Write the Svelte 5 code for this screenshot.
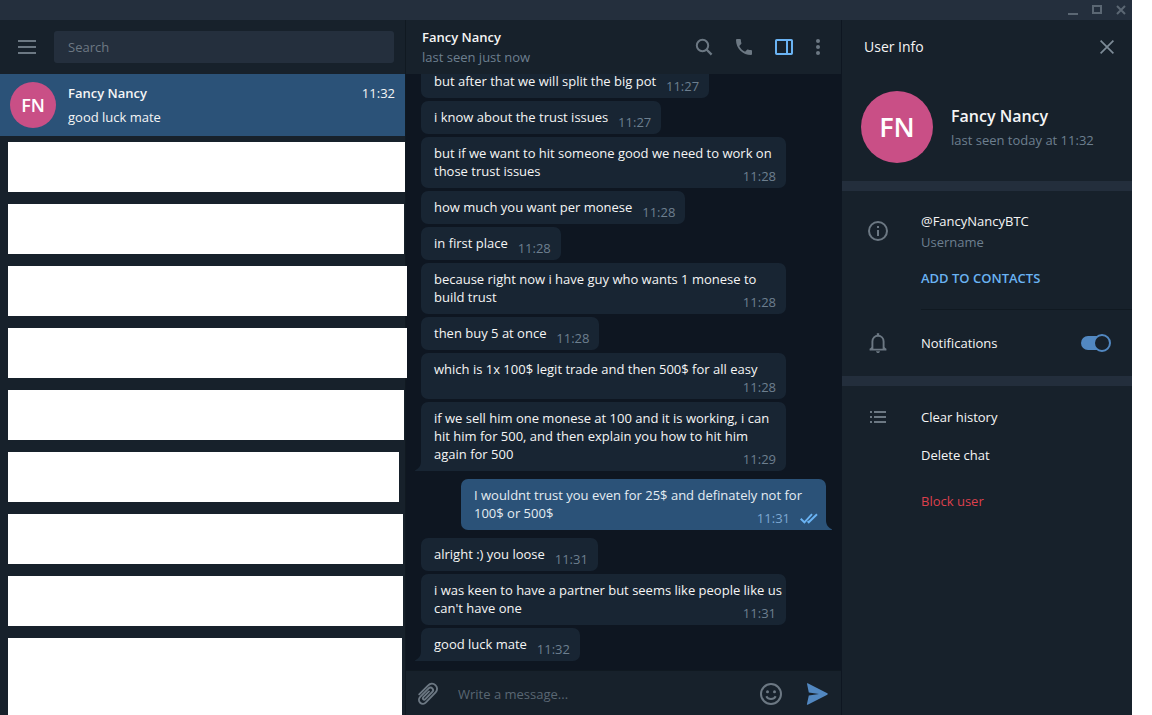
<script>
  const messages = [
    { text: 'but after that we will split the big pot', time: '11:27' },
    { text: 'i know about the trust issues', time: '11:27' },
    { text: 'but if we want to hit someone good we need to work on those trust issues', time: '11:28' },
    { text: 'how much you want per monese', time: '11:28' },
    { text: 'in first place', time: '11:28' },
    { text: 'because right now i have guy who wants 1 monese to build trust', time: '11:28' },
    { text: 'then buy 5 at once', time: '11:28' },
    { text: 'which is 1x 100$ legit trade and then 500$ for all easy', time: '11:28' },
    { text: 'if we sell him one monese at 100 and it is working, i can hit him for 500, and then explain you how to hit him again for 500', time: '11:29', tail: true },
    { text: 'I wouldnt trust you even for 25$ and definately not for 100$ or 500$', time: '11:31', tail: true, out: true },
    { text: 'alright :) you loose', time: '11:31' },
    { text: "i was keen to have a partner but seems like people like us can't have one", time: '11:31' },
    { text: 'good luck mate', time: '11:32', tail: true },
  ];

  // Right inset of each blanked-out conversation, in pixels.
  const blanks = [0, 1, -2, -2, 1, 6, 2, 2, 3];

  let notifications = $state(true);
  let query = $state('');
  let draft = $state('');
</script>

<div class="window">
  <header class="titlebar">
    <button aria-label="Minimize"><svg width="10" height="10" viewBox="0 0 10 10"><path d="M0 9H10" /></svg></button>
    <button aria-label="Maximize"><svg width="10" height="10" viewBox="0 0 10 10"><path d="M1 1H9V8H1Z" /></svg></button>
    <button aria-label="Close"><svg width="10" height="10" viewBox="0 0 10 10"><path d="M1 1L9 9M9 1L1 9" /></svg></button>
  </header>

  <div class="columns">
    <aside class="sidebar">
      <div class="bar search-bar">
        <button aria-label="Menu">
          <svg width="18" height="14" viewBox="0 0 18 14"><path d="M0 1H18M0 7H18M0 13H18" stroke="#6c7883" stroke-width="2" /></svg>
        </button>
        <input class="search" type="text" placeholder="Search" aria-label="Search" bind:value={query} />
      </div>
      <button class="conversation">
        <span class="avatar">FN</span>
        <span class="summary">
          <span class="line"><strong>Fancy Nancy</strong><time>11:32</time></span>
          <span class="line">good luck mate</span>
        </span>
      </button>
      <div class="blanks">
        {#each blanks as inset}
          <div class="blank" style="width: calc(100% - {inset}px)"></div>
        {/each}
      </div>
    </aside>

    <main class="chat">
      <header class="bar chat-bar">
        <div class="peer">
          <strong>Fancy Nancy</strong>
          <span class="muted">last seen just now</span>
        </div>
        <div class="tools">
          <button aria-label="Search messages">
            <svg width="18" height="18" viewBox="0 0 18 18" fill="none" stroke="#6c7883" stroke-width="2"><circle cx="7.5" cy="7.5" r="5.7" /><path d="M11.5 11.5L16.6 16.6" stroke-width="2.3" /></svg>
          </button>
          <button aria-label="Call">
            <svg width="16" height="16" viewBox="3 3 18 18" fill="#6c7883"><path d="M6.62 10.79c1.44 2.83 3.76 5.14 6.59 6.59l2.2-2.2c.27-.27.67-.36 1.02-.24 1.12.37 2.33.57 3.57.57.55 0 1 .45 1 1V20c0 .55-.45 1-1 1-9.39 0-17-7.61-17-17 0-.55.45-1 1-1h3.5c.55 0 1 .45 1 1 0 1.25.2 2.45.57 3.57.11.35.03.74-.25 1.02l-2.2 2.2z" /></svg>
          </button>
          <button aria-label="Toggle user info">
            <svg width="18" height="16" viewBox="0 0 18 16" fill="none" stroke="#6ab3f3" stroke-width="2"><rect x="1" y="1" width="16" height="14" rx="0.7" /><path d="M12 1V15" /></svg>
          </button>
          <button aria-label="More">
            <svg width="4" height="16" viewBox="0 0 4 16" fill="#6c7883"><circle cx="2" cy="2" r="2" /><circle cx="2" cy="8" r="2" /><circle cx="2" cy="14" r="2" /></svg>
          </button>
        </div>
      </header>

      <div class="history">
        {#each messages as m}
          <div class="bubble" class:out={m.out} class:tail={m.tail}>
            {m.text}<span class="spacer"></span>
            <span class="stamp">
              <time>{m.time}</time>
              {#if m.out}
                <svg width="18" height="11" viewBox="0 0 18 11" fill="none" stroke="#6ab3f3" stroke-width="1.9"><path d="M0.7 5.8L4.4 9.3L12 1.2M7.6 8.2L8.7 9.3L17 1.2" /></svg>
              {/if}
            </span>
            {#if m.tail}
              <svg class="tail-shape" width="7" height="10" viewBox="0 0 7 10"><path d="M7 0V10H0.6C-0.2 10 -0.1 9.4 0.6 9C4.6 7 6 4 6 0Z" /></svg>
            {/if}
          </div>
        {/each}
      </div>

      <form class="composer">
        <button type="button" aria-label="Attach">
          <svg width="22" height="24" viewBox="0 0 22 24" fill="none" stroke="#6c7883" stroke-width="1.9" stroke-linecap="round"><path d="M2.2 12.4L11.2 3.4C13.1 1.4 16.2 1.1 18.4 3.1C20.6 5.1 20.6 8.3 18.6 10.4L8.9 20.4C7.3 22.1 4.8 22.2 3.2 20.7C1.5 19.1 1.6 16.6 3.2 14.9L11.6 6.4C12.7 5.3 14.3 5.3 15.3 6.3C16.3 7.3 16.3 8.9 15.2 10L8.3 17.1C7.6 17.8 6.8 17.8 6.2 17.3C5.6 16.7 5.7 15.8 6.3 15.2L12 9.4" /></svg>
        </button>
        <input type="text" placeholder="Write a message..." aria-label="Write a message" bind:value={draft} />
        <button type="button" aria-label="Emoji">
          <svg width="22" height="22" viewBox="0 0 22 22" fill="none" stroke="#6c7883" stroke-width="2"><circle cx="11" cy="11" r="10" /><path d="M6.3 13.2C8.2 16.8 13.8 16.8 15.7 13.2" /><circle cx="7.5" cy="8.7" r="1.5" fill="#6c7883" stroke="none" /><circle cx="14.5" cy="8.7" r="1.5" fill="#6c7883" stroke="none" /></svg>
        </button>
        <button type="button" aria-label="Send">
          <svg width="22" height="22" viewBox="0 0 22 22" fill="#5288c1"><path d="M1 0.8C0.8 0.3 1.2 0.1 1.7 0.3L21.3 10.3C21.9 10.6 21.9 11.4 21.3 11.7L1.7 21.7C1.2 21.9 0.8 21.7 0.9 21.2L2.8 12.6L13 11L2.8 9.4Z" /></svg>
        </button>
      </form>
    </main>

    <aside class="info">
      <header class="bar info-bar">
        <h2>User Info</h2>
        <button aria-label="Close panel">
          <svg width="14" height="14" viewBox="0 0 14 14" stroke="#7d8b97" stroke-width="1.7"><path d="M0.6 0.6L13.4 13.4M13.4 0.6L0.6 13.4" /></svg>
        </button>
      </header>
      <section class="profile">
        <span class="avatar large">FN</span>
        <div class="who">
          <h3>Fancy Nancy</h3>
          <span class="muted">last seen today at 11:32</span>
        </div>
      </section>
      <section class="details">
        <div class="row contact">
          <svg class="icon" width="20" height="20" viewBox="0 0 20 20" fill="none" stroke="#6c7883" stroke-width="2"><circle cx="10" cy="10" r="9" /><path d="M10 9V15M10 5V7" /></svg>
          <div class="fields">
            <span>@FancyNancyBTC</span>
            <span class="muted">Username</span>
            <button class="add">ADD TO CONTACTS</button>
          </div>
        </div>
        <div class="row notify">
          <svg class="icon" width="18" height="20" viewBox="0 0 18 20" fill="none" stroke="#6c7883" stroke-width="1.9"><path d="M0.6 16.6H17.4M3.4 16.6V8.6C3.4 5 5.8 2.8 9 2.8C12.2 2.8 14.6 5 14.6 8.6V16.6" /><path d="M9 0.2V3" stroke-width="2.4" /><path d="M3.4 14.6L1.2 16.6M14.6 14.6L16.8 16.6" /><path d="M7 18.2H11C10.8 19.4 10 20 9 20S7.2 19.4 7 18.2Z" fill="#6c7883" stroke="none" /></svg>
          <label for="notifications">Notifications</label>
          <input id="notifications" class="switch" type="checkbox" bind:checked={notifications} />
        </div>
      </section>
      <section class="actions">
        <div class="row">
          <svg class="icon" width="16" height="12" viewBox="0 0 16 12" stroke="#6c7883" stroke-width="2"><path d="M0 1H2M0 6H2M0 11H2M4 1H16M4 6H16M4 11H16" /></svg>
          <button>Clear history</button>
        </div>
        <div class="row"><button class="bare">Delete chat</button></div>
        <div class="row block"><button class="bare danger">Block user</button></div>
      </section>
    </aside>
  </div>
</div>

<style>
  :global(body) {
    margin: 0;
    background: #fff;
  }

  .window {
    display: flex;
    flex-direction: column;
    height: 100vh;
    margin-right: 20px;
    overflow: hidden;
    background: #17212b;
    color: #f5f5f5;
    font: 13px/18px 'Open Sans', 'Noto Sans', sans-serif;
  }

  .window * {
    box-sizing: border-box;
  }

  button,
  input {
    margin: 0;
    padding: 0;
    border: 0;
    background: none;
    color: inherit;
    font: inherit;
  }

  button {
    display: flex;
    align-items: center;
    text-align: left;
    cursor: pointer;
  }

  input {
    outline: none;
  }

  input::placeholder {
    color: #6d7883;
    opacity: 1;
  }

  svg {
    display: block;
    flex: none;
  }

  strong {
    font-weight: 600;
  }

  .muted {
    color: #6d7f8f;
  }

  .titlebar {
    display: flex;
    flex: none;
    justify-content: flex-end;
    align-items: center;
    gap: 14px;
    height: 20px;
    padding-right: 6px;
    background: #242f3d;
  }

  .titlebar svg {
    fill: none;
    stroke: #5b6773;
    stroke-width: 2;
  }

  .columns {
    display: grid;
    grid-template-columns: minmax(0, 405fr) minmax(0, 436fr) minmax(0, 291fr);
    grid-template-rows: minmax(0, 1fr);
    flex: 1;
    min-height: 0;
  }

  .bar {
    display: flex;
    flex: none;
    align-items: center;
    height: 54px;
  }

  .sidebar {
    position: relative;
    z-index: 1;
    display: flex;
    flex-direction: column;
    min-height: 0;
  }

  .search-bar {
    gap: 18px;
    padding: 0 11px 0 18px;
  }

  .search {
    flex: 1;
    min-width: 0;
    height: 32px;
    padding: 0 14px;
    border-radius: 3px;
    background: #242f3d;
  }

  .conversation {
    flex: none;
    gap: 12px;
    height: 62px;
    padding: 0 10px;
    background: #2b5278;
  }

  .avatar {
    display: flex;
    flex: none;
    align-items: center;
    justify-content: center;
    width: 46px;
    height: 46px;
    border-radius: 50%;
    background: #c94f86;
    color: #fff;
    font-size: 18px;
    font-weight: 600;
  }

  .avatar.large {
    width: 72px;
    height: 72px;
    font-size: 27px;
  }

  .summary {
    display: flex;
    flex: 1;
    flex-direction: column;
    gap: 6px;
  }

  .line {
    display: flex;
    justify-content: space-between;
  }

  .blanks {
    display: flex;
    flex: 1;
    flex-direction: column;
    gap: 12px;
    min-height: 0;
    padding: 6px 0 0 8px;
  }

  .blank {
    flex: none;
    height: 50px;
    background: #fff;
  }

  .blank:last-child {
    flex: 1;
  }

  .chat {
    display: flex;
    flex-direction: column;
    min-height: 0;
    border-left: 1px solid #101921;
    background: #0e1621;
  }

  .chat-bar {
    justify-content: space-between;
    padding: 0 21px 0 16px;
    background: #17212b;
  }

  .peer {
    display: flex;
    flex-direction: column;
    gap: 2px;
  }

  .tools {
    display: flex;
    align-items: center;
    gap: 23px;
  }

  .history {
    display: flex;
    flex: 1;
    flex-direction: column;
    align-items: flex-start;
    justify-content: flex-end;
    gap: 3px;
    min-height: 0;
    overflow: hidden;
    padding: 0 15px 9px;
  }

  .bubble {
    position: relative;
    display: flow-root;
    flex: none;
    max-width: 365px;
    padding: 7px 3px 8px 13px;
    border-radius: 7px;
    background: #182533;
    fill: #182533;
  }

  .bubble.tail {
    border-bottom-left-radius: 0;
  }

  .bubble.out {
    align-self: flex-end;
    margin: 5px 0;
    border-radius: 7px 7px 0 7px;
    background: #2b5278;
    color: #e4ecf2;
    fill: #2b5278;
  }

  /* Reserves room for the time at the end of the last line. */
  .spacer {
    float: right;
    width: 50px;
    height: 13px;
  }

  .out .spacer {
    width: 78px;
  }

  .stamp {
    position: absolute;
    right: 10px;
    bottom: 3px;
    display: flex;
    align-items: center;
    gap: 10px;
    color: #6d7f8f;
  }

  .out .stamp {
    right: 8px;
    color: #7da8d3;
  }

  .tail-shape {
    position: absolute;
    bottom: 0;
    left: -6px;
  }

  .out .tail-shape {
    right: -6px;
    left: auto;
    transform: scaleX(-1);
  }

  .composer {
    display: flex;
    flex: none;
    align-items: center;
    gap: 19px;
    height: 45px;
    padding: 1px 13px 0 11px;
    border-top: 1px solid #101921;
    background: #17212b;
  }

  .composer input {
    flex: 1;
    min-width: 0;
  }

  .composer button:last-child {
    margin-left: 5px;
  }

  .composer input::placeholder {
    color: #5a6773;
  }

  .info {
    display: flex;
    flex-direction: column;
    min-width: 0;
    border-left: 1px solid #0e1621;
  }

  .info-bar {
    justify-content: space-between;
    padding: 0 18px 0 22px;
  }

  h2,
  h3 {
    margin: 0;
    font-size: 14px;
    font-weight: 500;
  }

  h3 {
    font-size: 16px;
    font-weight: 600;
    line-height: 22px;
  }

  .profile {
    display: flex;
    align-items: center;
    gap: 18px;
    padding: 17px 19px 18px;
  }

  .who {
    display: flex;
    flex-direction: column;
    gap: 4px;
  }

  .details {
    border: solid #232e3c;
    border-width: 10px 0;
  }

  .row {
    display: flex;
    align-items: center;
    min-height: 38px;
    padding-right: 21px;
  }

  .icon {
    box-sizing: content-box;
    width: 20px;
    padding: 0 33px 0 26px;
  }

  .contact {
    align-items: flex-start;
    padding-right: 0;
  }

  .contact .icon {
    padding-top: 30px;
  }

  .fields {
    display: flex;
    flex: 1;
    flex-direction: column;
    align-items: flex-start;
    gap: 3px;
    padding: 21px 0 22px;
    border-bottom: 1px solid #101921;
  }

  .add {
    margin-top: 15px;
    color: #6ab3f3;
    font-weight: 600;
  }

  .notify {
    min-height: 66px;
  }

  .notify label {
    flex: 1;
  }

  .switch {
    position: relative;
    width: 30px;
    height: 18px;
    appearance: none;
    cursor: pointer;
  }

  .switch::before {
    position: absolute;
    top: 2px;
    right: 3px;
    bottom: 2px;
    left: 0;
    border-radius: 7px;
    background: #5288c1;
    content: '';
  }

  .switch::after {
    position: absolute;
    top: 0;
    right: 0;
    box-sizing: border-box;
    width: 18px;
    height: 18px;
    border: 2px solid #5288c1;
    border-radius: 50%;
    background: #17212b;
    content: '';
  }

  .switch:not(:checked)::before {
    background: #6c7883;
  }

  .switch:not(:checked)::after {
    right: 12px;
    border-color: #6c7883;
  }

  .actions {
    padding-top: 12px;
  }

  .bare {
    margin-left: 79px;
  }

  .block {
    margin-top: 8px;
  }

  .danger {
    color: #dc404d;
  }
</style>
